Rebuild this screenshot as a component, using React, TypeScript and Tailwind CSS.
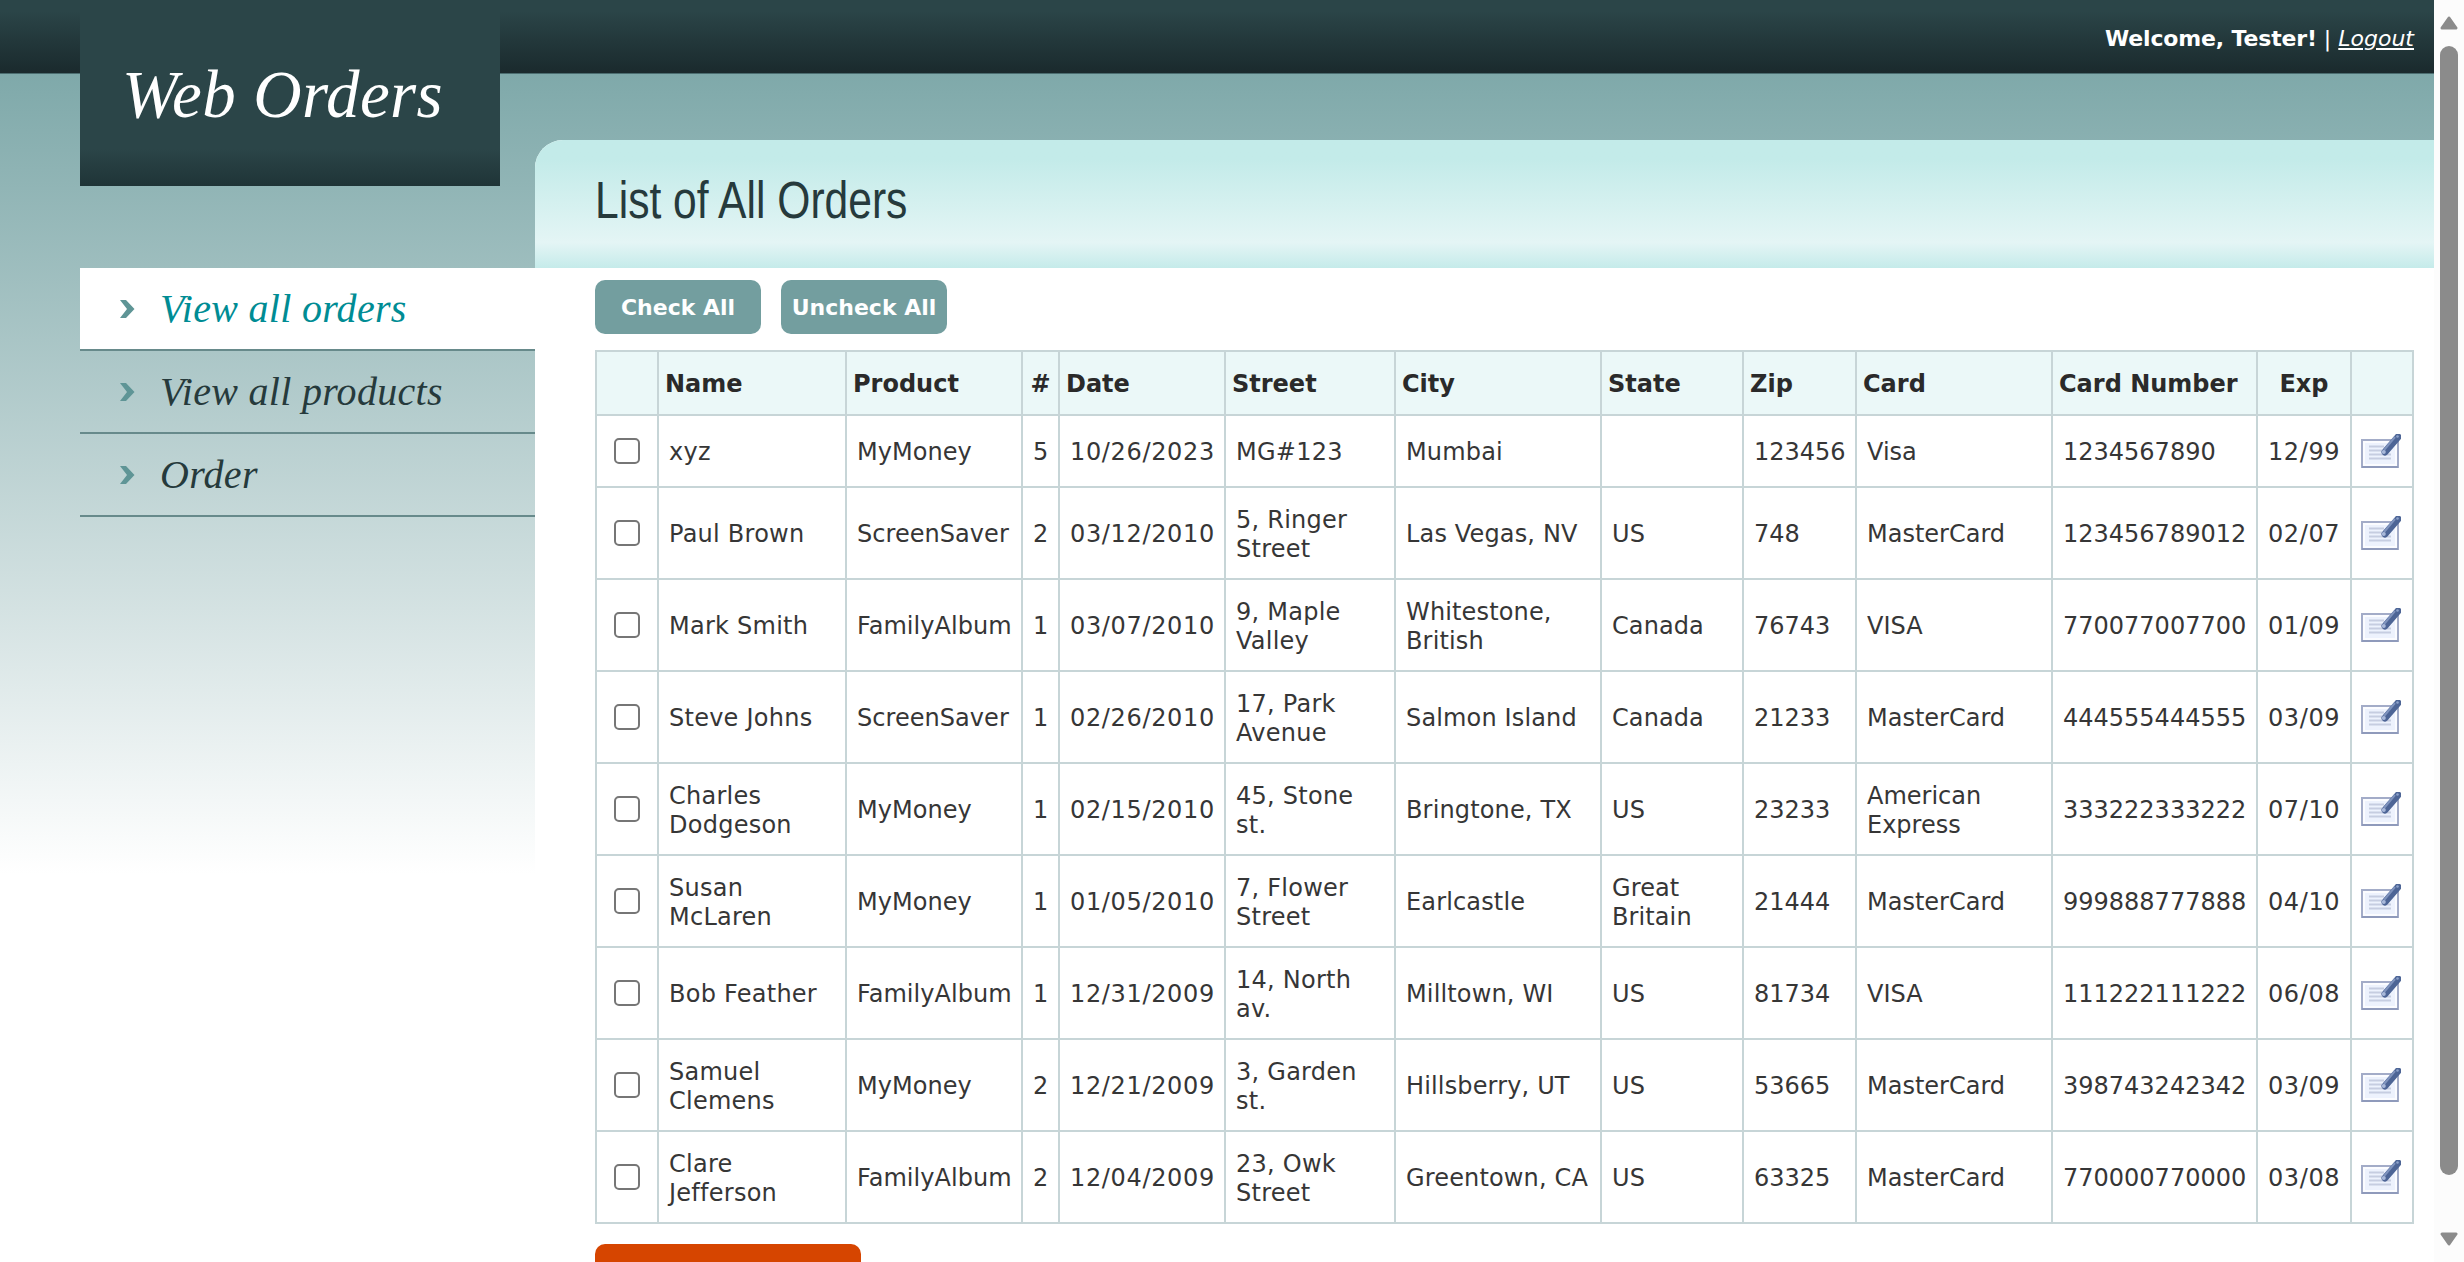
import React from "react";

type Row = string[];

const ROWS: Row[] = [
  ["xyz", "MyMoney", "5", "10/26/2023", "MG#123", "Mumbai", "", "123456", "Visa", "1234567890", "12/99"],
  ["Paul Brown", "ScreenSaver", "2", "03/12/2010", "5, Ringer\nStreet", "Las Vegas, NV", "US", "748", "MasterCard", "123456789012", "02/07"],
  ["Mark Smith", "FamilyAlbum", "1", "03/07/2010", "9, Maple\nValley", "Whitestone,\nBritish", "Canada", "76743", "VISA", "770077007700", "01/09"],
  ["Steve Johns", "ScreenSaver", "1", "02/26/2010", "17, Park\nAvenue", "Salmon Island", "Canada", "21233", "MasterCard", "444555444555", "03/09"],
  ["Charles\nDodgeson", "MyMoney", "1", "02/15/2010", "45, Stone\nst.", "Bringtone, TX", "US", "23233", "American\nExpress", "333222333222", "07/10"],
  ["Susan\nMcLaren", "MyMoney", "1", "01/05/2010", "7, Flower\nStreet", "Earlcastle", "Great\nBritain", "21444", "MasterCard", "999888777888", "04/10"],
  ["Bob Feather", "FamilyAlbum", "1", "12/31/2009", "14, North\nav.", "Milltown, WI", "US", "81734", "VISA", "111222111222", "06/08"],
  ["Samuel\nClemens", "MyMoney", "2", "12/21/2009", "3, Garden\nst.", "Hillsberry, UT", "US", "53665", "MasterCard", "398743242342", "03/09"],
  ["Clare\nJefferson", "FamilyAlbum", "2", "12/04/2009", "23, Owk\nStreet", "Greentown, CA", "US", "63325", "MasterCard", "770000770000", "03/08"],
];

const HEADERS = ["Name", "Product", "#", "Date", "Street", "City", "State", "Zip", "Card", "Card Number", "Exp"];
const COLUMNS = [62, 188, 176, 37, 166, 170, 206, 142, 113, 196, 205, 94, 62];
const TRACKING = [
  "tracking-[0.25px]",
  "tracking-[0.05px]",
  "",
  "tracking-[0.65px]",
  "tracking-[0.25px]",
  "tracking-[0.15px]",
  "tracking-[0.1px]",
  "",
  "",
  "",
  "tracking-[0.6px]",
];

function EditIcon() {
  return (
    <svg width="40" height="34" viewBox="0 0 40 34" className="block">
      <rect x="1" y="6" width="36" height="27" fill="#fbfcff" stroke="#a3acc8" strokeWidth="2" />
      <path d="M1 33H37" stroke="#8f9abb" strokeWidth="2" />
      <rect x="4" y="9" width="30" height="21" fill="#edf2fd" />
      <path d="M8 12.5H23M8 16.5H21M8 20.5H30M8 24.5H30" stroke="#c6cde1" strokeWidth="2" />
      <path d="M24 18L37 3" stroke="#4d6596" strokeWidth="7" strokeLinecap="round" />
      <path d="M23.5 15.5L33.5 3.5" stroke="#7f93bd" strokeWidth="2" strokeLinecap="round" />
      <circle cx="22.8" cy="18" r="2" fill="#a9b9da" />
      <circle cx="36.5" cy="2.5" r="1.3" fill="#8ea2cb" />
    </svg>
  );
}

function Chevron() {
  return (
    <svg width="15" height="18" viewBox="0 0 15 18" className="block">
      <path d="M0 0H6L14.5 9L6 18H0L7 9Z" fill="#5f9596" />
    </svg>
  );
}

function NavItem({ label, active }: { label: string; active?: boolean }) {
  return (
    <a className={`flex h-[83px] items-center border-b-2 border-[#678a8b] pl-10 ${active ? "bg-white text-[#008c94]" : "text-[#263a3c]"}`}>
      <Chevron />
      <span className="ml-[25px] whitespace-nowrap font-['Liberation_Serif',serif] text-[40px] leading-[80px] italic tracking-[0.3px]">{label}</span>
    </a>
  );
}

export default function App() {
  return (
    <div className="flex h-[1262px] w-[2464px] overflow-hidden bg-white font-['DejaVu_Sans',sans-serif] text-[24px] text-[#363636]">
      <div className="flex w-[2434px] flex-col">
        <header className="relative z-10 flex h-[74px] shrink-0 justify-between border-b border-[#4b6d70] bg-linear-to-b from-[#2b4548] from-15% to-[#1a2a2d]">
          <div className="ml-20 flex h-[186px] w-[420px] items-center bg-linear-to-b from-[#2b4548] from-80% to-[#1f3437] pt-[3px] pl-[42px]">
            <span className="whitespace-nowrap font-['Liberation_Serif',serif] text-[67px] leading-none italic tracking-[0.4px] text-white">Web Orders</span>
          </div>
          <div className="mr-[20px] pt-[25px] text-[22px] leading-[28px] text-white">
            <b className="tracking-[-0.15px]">Welcome, Tester!</b> | <i className="underline">Logout</i>
          </div>
        </header>
        <div className="flex h-[1188px] bg-linear-to-b from-[#7fa9aa] to-white to-[800px]">
          <nav className="flex w-[535px] shrink-0 flex-col pt-[194px] pl-20">
            <NavItem label="View all orders" active />
            <NavItem label="View all products" />
            <NavItem label="Order" />
          </nav>
          <main className="mt-[66px] flex grow flex-col overflow-hidden rounded-tl-[28px] bg-white">
            <div className="flex h-32 shrink-0 items-center bg-linear-to-b from-[#c3ebe9] from-15% via-[#e4f5f5] via-80% to-[#c5ebea] pb-[7px] pl-[60px]">
              <h1 className="origin-left scale-x-[0.835] whitespace-nowrap font-['Liberation_Sans',sans-serif] text-[51px] leading-none text-[#263a3c]">List of All Orders</h1>
            </div>
            <div className="mt-3 ml-[60px] flex shrink-0 gap-5 text-[22px] font-bold text-white">
              <button className="h-[54px] w-[166px] rounded-[10px] bg-[#739e9f]">Check All</button>
              <button className="h-[54px] w-[166px] rounded-[10px] bg-[#739e9f] whitespace-nowrap">Uncheck All</button>
            </div>
            <table className="mt-4 ml-[60px] w-[1819px] shrink-0 table-fixed border-collapse border-2 border-[#c7d5d7] leading-[29px]">
              <colgroup>
                {COLUMNS.map((width, i) => (
                  <col key={i} style={{ width }} />
                ))}
              </colgroup>
              <thead>
                <tr className="h-16 bg-[#ebf8f8] text-left text-[#2a2a2a]">
                  <th className="border-2 border-[#c7d5d7]" />
                  {HEADERS.map((h) => (
                    <th key={h} className={`border-2 border-[#c7d5d7] pt-[3px] whitespace-nowrap ${h === "Exp" || h === "#" ? "text-center" : "pl-[6px]"}`}>{h}</th>
                  ))}
                  <th className="border-2 border-[#c7d5d7]" />
                </tr>
              </thead>
              <tbody>
                {ROWS.map((row, r) => (
                  <tr key={r} className={r === 0 ? "h-[72px]" : "h-[92px]"}>
                    <td className="border-2 border-[#c7d5d7]">
                      <input type="checkbox" className="mx-auto block size-[26px] appearance-none rounded-[5px] border-2 border-[#767676] bg-white" />
                    </td>
                    {row.map((text, c) => (
                      <td key={c} className={`border-2 border-[#c7d5d7] pt-[3px] pl-[10px] whitespace-pre ${TRACKING[c]}`}>{text}</td>
                    ))}
                    <td className="border-2 border-[#c7d5d7] pl-[9px]">
                      <EditIcon />
                    </td>
                  </tr>
                ))}
              </tbody>
            </table>
            <div className="mt-5 ml-[60px] h-[54px] w-[266px] shrink-0 rounded-[10px] bg-[#d64500]" />
          </main>
        </div>
      </div>
      <div className="flex w-[30px] flex-col items-center bg-[#fcfcfc] pt-4">
        <svg width="18" height="14" viewBox="0 0 18 14"><path d="M9 2L16 12H2Z" fill="#8b8b8b" stroke="#8b8b8b" strokeWidth="3" strokeLinejoin="round" /></svg>
        <div className="mt-4 h-[1129px] w-[18px] rounded-full bg-[#8b8b8b]" />
        <svg className="mt-[57px]" width="18" height="14" viewBox="0 0 18 14"><path d="M9 12L16 2H2Z" fill="#8b8b8b" stroke="#8b8b8b" strokeWidth="3" strokeLinejoin="round" /></svg>
      </div>
    </div>
  );
}
